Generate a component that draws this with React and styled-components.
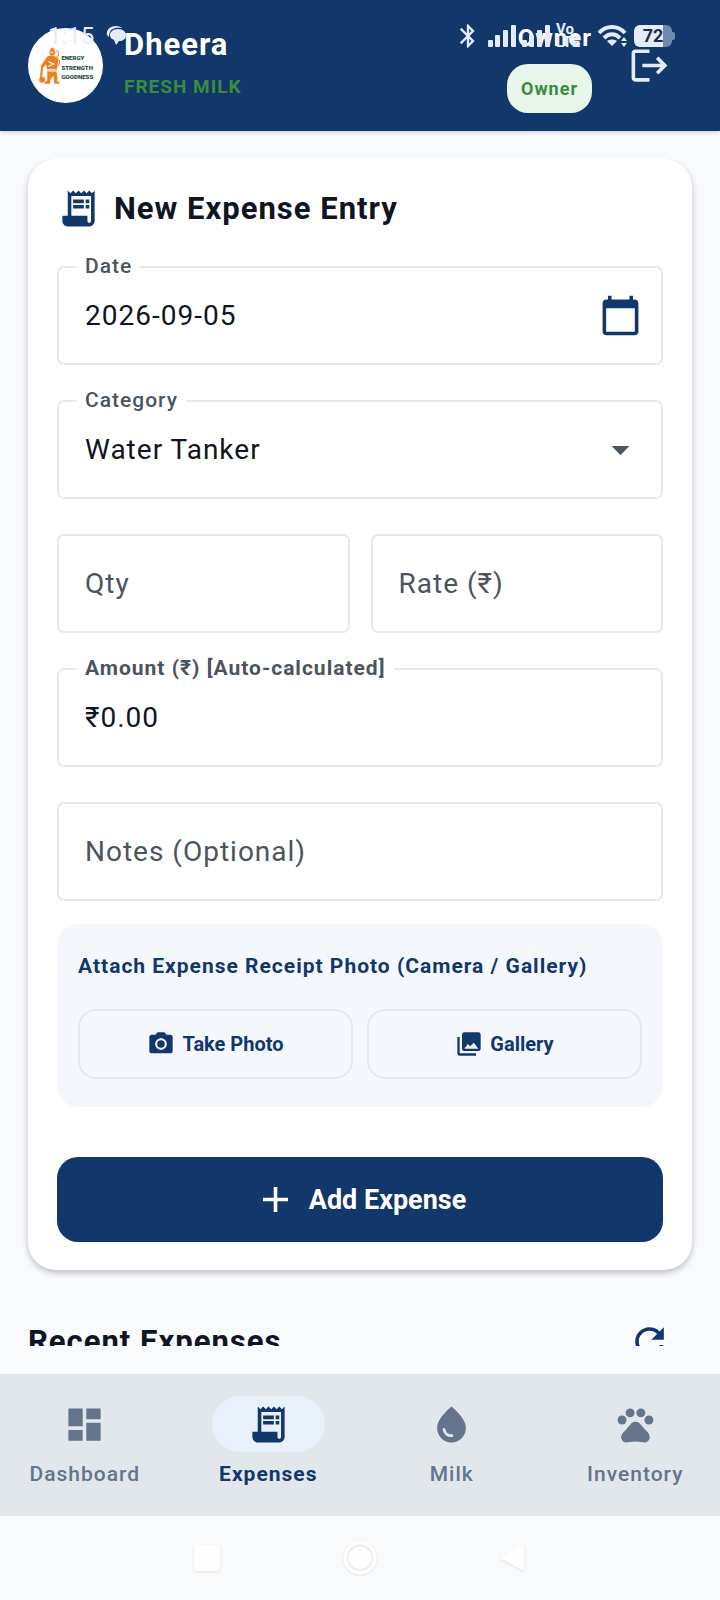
import React, { useState } from 'react'
import styled, { createGlobalStyle } from 'styled-components'
import {
  MdAdd,
  MdArrowDropDown,
  MdBluetooth,
  MdCalendarToday,
  MdCameraAlt,
  MdDashboard,
  MdLogout,
  MdPets,
  MdReceiptLong,
  MdRefresh,
  MdWaterDrop,
} from 'react-icons/md'

const GlobalStyle = createGlobalStyle`
  :root {
    --navy: #12376a;
    --ink: #0f1522;
    --muted: #4a5560;
    --slate: #64748b;
    --line: #e6e9ec;
    --page: #f8fafc;
    --green: #3a8c3e;
  }
  * {
    box-sizing: border-box;
  }
  body {
    margin: 0;
    background: var(--page);
    color: var(--ink);
    font-family: Roboto, 'Noto Sans', sans-serif;
  }
  button, input, select {
    font: inherit;
    color: inherit;
    letter-spacing: inherit;
  }
`

const Shell = styled.div`
  position: relative;
  display: flex;
  flex-direction: column;
  height: 100vh;
`

/* phone status bar, drawn over the header */
const StatusBar = styled.div`
  position: absolute;
  top: 0;
  left: 0;
  right: 0;
  display: flex;
  align-items: center;
  justify-content: space-between;
  height: 71px;
  padding: 0 45px 0 48px;
  color: #e4ecfa;
  pointer-events: none;
`

const StatusGroup = styled.div`
  display: flex;
  align-items: center;
  gap: ${(p) => p.$gap}px;
`

const Clock = styled.span`
  font-size: 24px;
  line-height: 24px;
`

const Volte = styled.span`
  display: flex;
  flex-direction: column;
  width: 36px;
  font-size: 15px;
  font-weight: 700;
  line-height: 13px;
`

const Battery = styled.span`
  display: flex;
  align-items: center;
  &::after {
    content: '';
    width: 3px;
    height: 8px;
    border-radius: 0 2px 2px 0;
    background: #7189a8;
  }
`

const BatteryLevel = styled.span`
  width: 38px;
  border-radius: 6px;
  background: linear-gradient(90deg, #e4ecfa 76%, #7189a8 76%);
  color: #1b2f4c;
  font-size: 18px;
  font-weight: 700;
  line-height: 22px;
  text-align: center;
`

const Header = styled.header`
  display: flex;
  flex: none;
  align-items: center;
  min-height: 131px;
  padding: 0 28px;
  background: var(--navy);
  box-shadow: 0 1px 4px rgba(15, 21, 34, 0.2);
`

const LogoMark = styled.svg`
  flex: none;
  width: 75px;
  height: 75px;
  margin-right: 21px;
`

const Brand = styled.div`
  flex: 1;
  line-height: 42px;
`

const BrandName = styled.h1`
  margin: 0;
  color: #fff;
  font-size: 31px;
  font-weight: 700;
  letter-spacing: 1px;
`

const Tagline = styled.p`
  margin: 0;
  color: var(--green);
  font-size: 19px;
  font-weight: 700;
  letter-spacing: 1px;
`

const Account = styled.div`
  display: flex;
  flex-direction: column;
  align-items: flex-end;
  gap: 7px;
  margin-right: 14px;
`

const AccountName = styled.span`
  color: #fff;
  font-size: 24px;
  font-weight: 700;
  line-height: 38px;
  letter-spacing: 1px;
`

const RoleBadge = styled.span`
  padding: 0 14px;
  border-radius: 21px;
  background: #e8f5e9;
  color: var(--green);
  font-size: 18px;
  font-weight: 700;
  line-height: 49px;
  letter-spacing: 1px;
`

const IconButton = styled.button`
  display: flex;
  flex: none;
  align-items: center;
  justify-content: center;
  width: ${(p) => p.$size || 86}px;
  height: ${(p) => p.$size || 86}px;
  padding: 0;
  border: 0;
  background: none;
  color: ${(p) => p.$color || 'var(--navy)'};
  cursor: pointer;
`

const Main = styled.main`
  flex: 1;
  min-height: 0;
  display: flex;
  padding: 28px 0;
`

const Scroller = styled.div`
  flex: 1;
  min-width: 0;
  overflow-y: auto;
  scrollbar-width: none;
  padding: 0 28px;
`

const Card = styled.form`
  padding: 28px 29px;
  border-radius: 28px;
  background: #fff;
  box-shadow: 0 3px 6px rgba(15, 21, 34, 0.25);
`

const CardTitle = styled.h2`
  display: flex;
  align-items: center;
  gap: 14px;
  margin: 0 0 36px;
  font-size: 31px;
  font-weight: 700;
  line-height: 43px;
  letter-spacing: 1px;
  svg {
    color: var(--navy);
  }
`

const Fields = styled.div`
  display: flex;
  flex-direction: column;
  gap: 35px;
  margin-bottom: 23px;
`

const FieldRow = styled.div`
  display: grid;
  grid-template-columns: repeat(2, minmax(0, 1fr));
  gap: 21px;
`

const Field = styled.div`
  position: relative;
  display: flex;
  align-items: center;
  height: 99px;
  padding-right: 19px;
  border: 2px solid var(--line);
  border-radius: 7px;
  > svg {
    flex: none;
    color: var(--muted);
    pointer-events: none;
  }
`

const FieldLabel = styled.label`
  position: absolute;
  top: -15px;
  left: 18px;
  padding: 0 8px;
  background: #fff;
  color: var(--muted);
  font-size: 21px;
  font-weight: ${(p) => (p.$strong ? 700 : 500)};
  line-height: 26px;
  letter-spacing: 1px;
`

const Input = styled.input`
  flex: 1;
  min-width: 0;
  height: 100%;
  padding: 0 0 0 26px;
  border: 0;
  outline: 0;
  background: none;
  font-size: 28px;
  letter-spacing: 1px;
  &::placeholder {
    color: var(--muted);
    opacity: 1;
  }
`

const Select = styled(Input).attrs({ as: 'select' })`
  appearance: none;
`

const Attachment = styled.section`
  margin-bottom: 50px;
  padding: 21px 21px 28px;
  border-radius: 21px;
  background: #f4f8fd;
  color: var(--navy);
`

const AttachmentTitle = styled.h3`
  margin: 0 0 22px;
  font-size: 21px;
  font-weight: 700;
  line-height: 42px;
  letter-spacing: 1px;
`

const AttachmentActions = styled.div`
  display: grid;
  grid-template-columns: 1fr 1fr;
  gap: 14px;
`

const OutlineButton = styled.button`
  display: flex;
  align-items: center;
  justify-content: center;
  gap: 7px;
  height: 70px;
  border: 2px solid var(--line);
  border-radius: 18px;
  background: none;
  font-size: 20px;
  font-weight: 700;
  cursor: pointer;
`

const SubmitButton = styled.button`
  display: flex;
  align-items: center;
  justify-content: center;
  gap: 12px;
  width: 100%;
  height: 85px;
  border: 0;
  border-radius: 21px;
  background: var(--navy);
  color: #fff;
  font-size: 27px;
  font-weight: 700;
  cursor: pointer;
`

const SectionHead = styled.div`
  display: flex;
  align-items: center;
  justify-content: space-between;
  margin-top: 28px;
`

const SectionTitle = styled.h2`
  margin: 0;
  font-size: 31px;
  font-weight: 700;
  letter-spacing: 1px;
`

const TabBar = styled.nav`
  display: grid;
  flex: none;
  grid-template-columns: repeat(4, 1fr);
  gap: 14px;
  padding: 22px 0 24px;
  background: #e2e7eb;
`

const Tab = styled.a`
  display: flex;
  flex-direction: column;
  align-items: center;
  gap: 4px;
  color: ${(p) => (p.$active ? 'var(--navy)' : 'var(--slate)')};
  font-size: 21px;
  font-weight: ${(p) => (p.$active ? 700 : 500)};
  line-height: 36px;
  letter-spacing: 1px;
  text-decoration: none;
`

const TabIcon = styled.span`
  display: flex;
  align-items: center;
  justify-content: center;
  width: 113px;
  height: 56px;
  border-radius: 28px;
  background: ${(p) => (p.$active ? '#e8f1fa' : 'transparent')};
`

const SystemBar = styled.div`
  display: flex;
  flex: none;
  align-items: center;
  justify-content: center;
  gap: 118px;
  height: 84px;
  svg {
    filter: drop-shadow(0 1px 1px rgba(15, 21, 34, 0.1));
  }
`

const Logo = () => (
  <LogoMark viewBox="0 0 74 74" role="img" aria-label="Dheera">
    <circle cx="37" cy="37" r="37" fill="#fff" />
    <g fill="#ee7f22">
      <path d="M22 21l2-2 2 2 1 3-1 3h-4l-1-3z" />
      <path d="M19 28l4-1 4 1 3 4-1 5-1 5H19l-1-6-3 3-1 7h-2l1-9z" />
      <path d="M19 43h9l1 6v4h2v2h-5l-1-8-3 4v4h-6l1-2 2-1z" />
      <circle cx="14" cy="51" r="3" />
      <path d="M12 45h2v6h-2z" />
    </g>
    <path d="M28 22c3 2 3 5 0 7 4 2 4 6 1 9" fill="none" stroke="#ee7f22" />
    <path d="M20 33l6 3M20 38l6-3M19 41h8M22 24h3" stroke="#fff" />
    <g fill="#1c4a3a" fontFamily="Roboto, sans-serif" fontSize="6" fontWeight="900">
      <text x="33" y="32">ENERGY</text>
      <text x="33" y="41">STRENGTH</text>
      <text x="33" y="50">GOODNESS</text>
    </g>
  </LogoMark>
)

const Signal = () => (
  <svg width="28" height="22" viewBox="0 0 28 22" fill="currentColor">
    <rect x="0" y="15" width="5" height="7" rx="1" />
    <rect x="7" y="10" width="5" height="12" rx="1" />
    <rect x="15" y="5" width="5" height="17" rx="1" />
    <rect x="23" y="0" width="5" height="22" rx="1" />
  </svg>
)

const Wifi = () => (
  <svg width="30" height="22" viewBox="0 0 30 22">
    <g fill="none" stroke="currentColor" strokeWidth="4">
      <path d="M1 8C8 0 20 0 27 8" />
      <path d="M6 13c5-5 11-5 16 0" />
    </g>
    <path d="M9 16c3-2 7-2 10 0l-5 5z" fill="currentColor" />
    <path d="M23 16l3-4 3 4zM23 18l3 4 3-4z" fill="currentColor" />
  </svg>
)

const Chat = () => (
  <svg width="20" height="20" viewBox="0 0 20 20" fill="currentColor">
    <path d="M1 9C0 3 5 0 10 0c3 0 5 1 6 2C8 1 3 3 3 11z" />
    <path d="M12 3c5 0 8 3 8 6 0 4-3 6-7 6l-3 4-2-5c-3-1-4-3-4-5 0-3 3-6 8-6z" />
  </svg>
)

const PhotoLibrary = () => (
  <svg width="28" height="28" viewBox="0 0 24 24" fill="currentColor">
    <path d="M2 6v14c0 1.100.9 2 2 2h14v-2H4V6z" />
    <path
      fillRule="evenodd"
      d="M8 2h12a2 2 0 0 1 2 2v12a2 2 0 0 1-2 2H8a2 2 0 0 1-2-2V4a2 2 0 0 1 2-2zM8 16h12l-4-5-3 3-2-2z"
    />
  </svg>
)

const tabs = [
  { name: 'Dashboard', Icon: MdDashboard },
  { name: 'Expenses', Icon: MdReceiptLong },
  { name: 'Milk', Icon: MdWaterDrop },
  { name: 'Inventory', Icon: MdPets },
]

const App = () => {
  const [active, setActive] = useState('Expenses')
  const [date, setDate] = useState('2026-09-05')
  const [qty, setQty] = useState('')
  const [rate, setRate] = useState('')
  const amount = (Number(qty) * Number(rate) || 0).toFixed(2)

  return (
    <>
      <GlobalStyle />
      <Shell>
        <Header>
          <Logo />
          <Brand>
            <BrandName>Dheera</BrandName>
            <Tagline>FRESH MILK</Tagline>
          </Brand>
          <Account>
            <AccountName>Owner</AccountName>
            <RoleBadge>Owner</RoleBadge>
          </Account>
          <IconButton $color="#e4ecfa" aria-label="Log out">
            <MdLogout size={43} />
          </IconButton>
        </Header>

        <Main>
          <Scroller>
            <Card onSubmit={(e) => e.preventDefault()}>
              <CardTitle>
                <MdReceiptLong size={43} />
                New Expense Entry
              </CardTitle>
              <Fields>
                <Field>
                  <FieldLabel htmlFor="date">Date</FieldLabel>
                  <Input id="date" value={date} onChange={(e) => setDate(e.target.value)} />
                  <IconButton type="button" $size={43} aria-label="Pick a date">
                    <MdCalendarToday size={43} />
                  </IconButton>
                </Field>
                <Field>
                  <FieldLabel htmlFor="category">Category</FieldLabel>
                  <Select id="category">
                    <option>Water Tanker</option>
                  </Select>
                  <MdArrowDropDown size={43} />
                </Field>
                <FieldRow>
                  <Field>
                    <Input
                      aria-label="Qty"
                      placeholder="Qty"
                      value={qty}
                      onChange={(e) => setQty(e.target.value)}
                    />
                  </Field>
                  <Field>
                    <Input
                      aria-label="Rate (₹)"
                      placeholder="Rate (₹)"
                      value={rate}
                      onChange={(e) => setRate(e.target.value)}
                    />
                  </Field>
                </FieldRow>
                <Field>
                  <FieldLabel htmlFor="amount" $strong>
                    Amount (₹) [Auto-calculated]
                  </FieldLabel>
                  <Input id="amount" value={`₹${amount}`} readOnly />
                </Field>
                <Field>
                  <Input aria-label="Notes (Optional)" placeholder="Notes (Optional)" />
                </Field>
              </Fields>
              <Attachment>
                <AttachmentTitle>Attach Expense Receipt Photo (Camera / Gallery)</AttachmentTitle>
                <AttachmentActions>
                  <OutlineButton type="button">
                    <MdCameraAlt size={28} />
                    Take Photo
                  </OutlineButton>
                  <OutlineButton type="button">
                    <PhotoLibrary />
                    Gallery
                  </OutlineButton>
                </AttachmentActions>
              </Attachment>
              <SubmitButton type="submit">
                <MdAdd size={43} />
                Add Expense
              </SubmitButton>
            </Card>
            <SectionHead>
              <SectionTitle>Recent Expenses</SectionTitle>
              <IconButton aria-label="Refresh">
                <MdRefresh size={43} />
              </IconButton>
            </SectionHead>
          </Scroller>
        </Main>

        <TabBar>
          {tabs.map(({ name, Icon }) => (
            <Tab
              key={name}
              href={`#${name.toLowerCase()}`}
              $active={name === active}
              onClick={() => setActive(name)}
            >
              <TabIcon $active={name === active}>
                <Icon size={43} />
              </TabIcon>
              {name}
            </Tab>
          ))}
        </TabBar>

        <SystemBar>
          <svg width="34" height="34" viewBox="0 0 34 34">
            <rect x="4" y="4" width="26" height="26" rx="4" fill="#fefefe" />
          </svg>
          <svg width="36" height="36" viewBox="0 0 36 36">
            <circle cx="18" cy="18" r="15" fill="none" stroke="#fefefe" strokeWidth="3" />
            <circle cx="18" cy="18" r="11" fill="#fefefe" />
          </svg>
          <svg width="34" height="34" viewBox="0 0 34 34">
            <path d="M28 3v27L4 17z" fill="#fefefe" />
          </svg>
        </SystemBar>

        <StatusBar>
          <StatusGroup $gap={12}>
            <Clock>1:15</Clock>
            <Chat />
          </StatusGroup>
          <StatusGroup $gap={6}>
            <MdBluetooth size={28} />
            <Signal />
            <Signal />
            <Volte>
              <span>Vo</span>
              <span>LTE</span>
            </Volte>
            <Wifi />
            <Battery>
              <BatteryLevel>72</BatteryLevel>
            </Battery>
          </StatusGroup>
        </StatusBar>
      </Shell>
    </>
  )
}

export default App
